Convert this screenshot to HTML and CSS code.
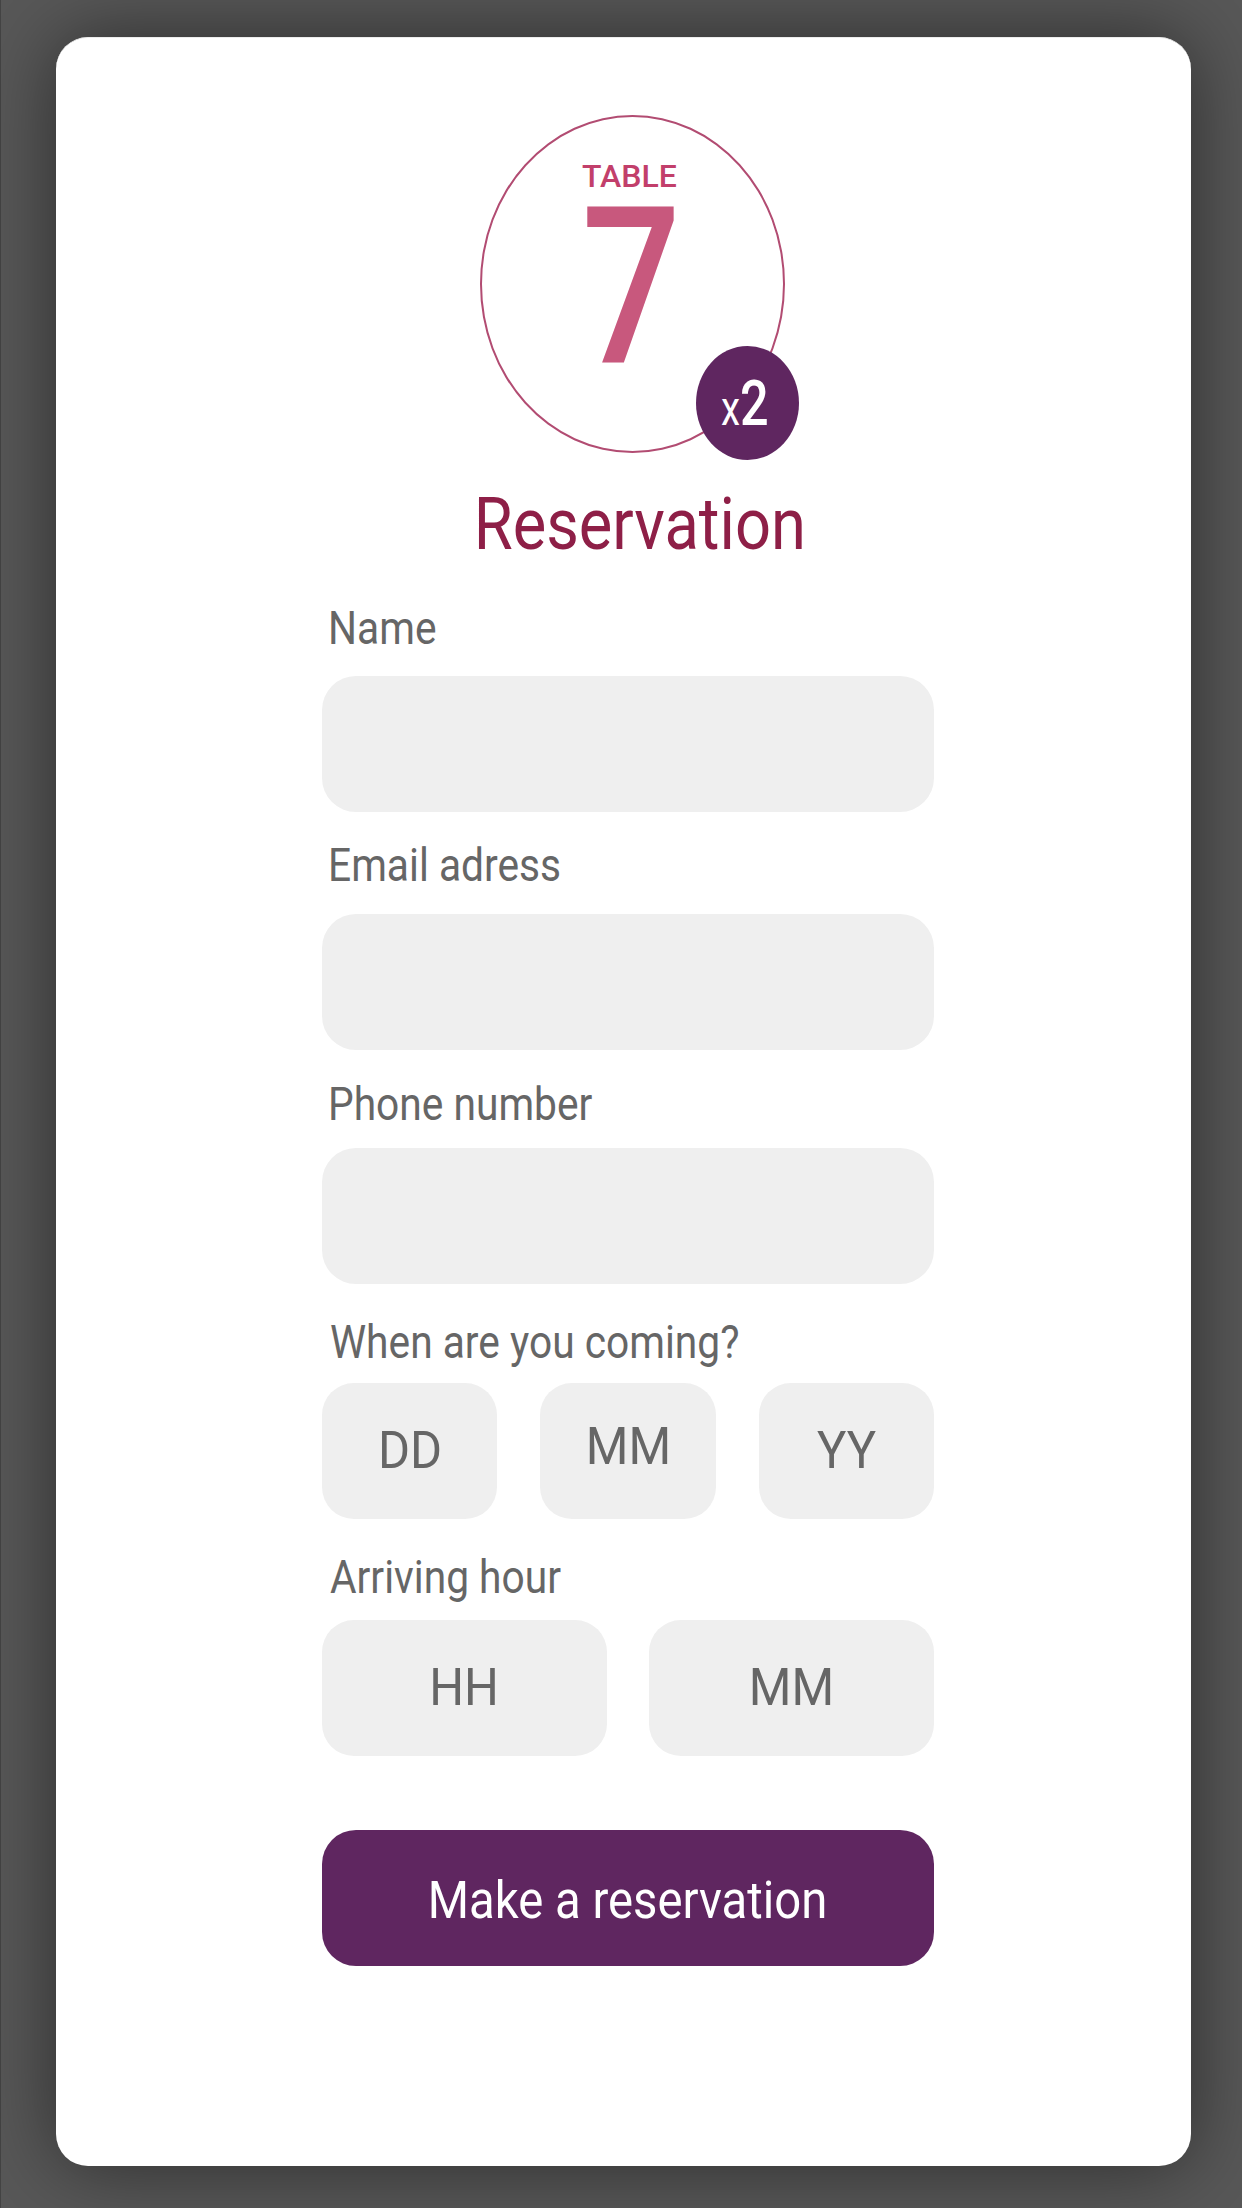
FILE: index.html
```html
<!DOCTYPE html>
<html lang="en">
<head>
<meta charset="utf-8">
<title>Table 7 – Reservation</title>
<link rel="stylesheet" href="styles.css">
</head>
<body>
<div class="screen">
  <main class="card">
    <div class="content">
      <div class="logo">
        <div class="table-word">TABLE</div>
        <div class="table-num"><span class="num-glyph">7</span></div>
        <div class="badge"><span class="badge-text"><span class="bx">x</span>2</span></div>
      </div>
      <h1 class="title"><span class="title-text">Reservation</span></h1>

      <div class="field f-name">
        <div class="label"><span class="label-text">Name</span></div>
        <div class="input"></div>
      </div>
      <div class="field f-email">
        <div class="label"><span class="label-text">Email adress</span></div>
        <div class="input"></div>
      </div>
      <div class="field f-phone">
        <div class="label"><span class="label-text">Phone number</span></div>
        <div class="input"></div>
      </div>
      <div class="field f-date">
        <div class="label"><span class="label-text">When are you coming?</span></div>
        <div class="row row-3">
          <div class="input small"><span class="ph">DD</span></div>
          <div class="input small up"><span class="ph">MM</span></div>
          <div class="input small"><span class="ph">YY</span></div>
        </div>
      </div>
      <div class="field f-hour">
        <div class="label"><span class="label-text">Arriving hour</span></div>
        <div class="row row-2">
          <div class="input small"><span class="ph">HH</span></div>
          <div class="input small"><span class="ph">MM</span></div>
        </div>
      </div>

      <button class="submit" type="button"><span class="submit-text">Make a reservation</span></button>
    </div>
  </main>
</div>
</body>
</html>
```

FILE: styles.css
```css
* { box-sizing: border-box; }

html, body {
  margin: 0;
  padding: 0;
}

body {
  width: 1242px;
  height: 2208px;
  background: #585858;
  font-family: Roboto, "Noto Sans", "Liberation Sans", sans-serif;
  overflow: hidden;
}

.screen {
  width: 1242px;
  height: 2208px;
  padding: 37px 52px 0 55px;
  border-left: 1px solid #444;
}

.card {
  width: 1135px;
  height: 2129px;
  background: #ffffff;
  border-radius: 32px;
  border-top: 1px solid #ececec;
  box-shadow: 0 0 80px 0 rgba(0, 0, 0, 0.5);
  overflow: hidden;
}

.content {
  width: 612px;
  margin-left: 266px;
  display: flex;
  flex-direction: column;
}

/* ---------- logo ---------- */
.logo {
  position: relative;
  width: 305px;
  height: 338px;
  margin-top: 77px;
  margin-left: 158px;
  border: 2px solid #b24c72;
  border-radius: 50%;
  display: flex;
  flex-direction: column;
  align-items: center;
  padding-top: 43px;
  padding-right: 6px;
}

.table-word {
  font-size: 32px;
  line-height: 32px;
  font-weight: 500;
  color: #c23f6b;
}

.table-num {
  margin-top: 15px;
  font-size: 219px;
  line-height: 160px;
  font-weight: 500;
  color: #c8587d;
  padding-left: 4px;
}

.num-glyph {
  display: inline-block;
  transform: scaleX(0.8);
}

.badge {
  position: absolute;
  left: 214px;
  top: 229px;
  width: 103px;
  height: 114px;
  border-radius: 50%;
  background: #5f2660;
  display: flex;
  align-items: center;
  justify-content: center;
  padding-right: 5px;
}

.badge-text {
  display: inline-block;
  color: #ffffff;
  font-size: 63px;
  line-height: 63px;
  font-weight: 500;
  transform: scaleX(0.8);
}

.bx {
  font-size: 48px;
  line-height: 48px;
  font-weight: 400;
}

/* ---------- title ---------- */
.title {
  margin: 35px 0 0;
  padding-left: 24px;
  text-align: center;
  font-size: 73px;
  line-height: 73px;
  font-weight: 400;
  color: #8e1f47;
}

.title-text {
  display: inline-block;
  transform: scaleX(0.866);
}

/* ---------- fields ---------- */
.label {
  font-size: 46px;
  line-height: 46px;
  color: #666666;
  padding-left: 6px;
}

.label-text {
  display: inline-block;
  transform: scaleX(0.885);
  transform-origin: left center;
}

.input {
  height: 136px;
  background: #efefef;
  border-radius: 34px;
}

.f-name { margin-top: 44px; }
.f-name .label { margin-bottom: 25px; }

.f-email { margin-top: 30px; }
.f-email .label { margin-bottom: 26px; }

.f-phone { margin-top: 31px; }
.f-phone .label { margin-bottom: 21px; }

.f-date { margin-top: 35px; }
.f-date .label { margin-bottom: 18px; padding-left: 8px; }

.f-hour { margin-top: 35px; }
.f-hour .label { margin-bottom: 20px; padding-left: 8px; }

.row {
  display: grid;
}

.row-3 {
  grid-template-columns: repeat(3, 1fr);
  column-gap: 43px;
}

.row-2 {
  grid-template-columns: repeat(2, 1fr);
  column-gap: 42px;
}

.input.small {
  border-radius: 32px;
  text-align: center;
  font-size: 52px;
  line-height: 136px;
  color: #666666;
}

.input.small.up {
  line-height: 128px;
}

.ph {
  display: inline-block;
  transform: scaleX(0.94);
}

/* ---------- button ---------- */
.submit {
  margin-top: 74px;
  height: 136px;
  width: 612px;
  border: none;
  border-radius: 34px;
  background: #5f2660;
  color: #ffffff;
  font-family: Roboto, "Noto Sans", "Liberation Sans", sans-serif;
  font-size: 51px;
  line-height: 131px;
  padding: 5px 0 0;
  text-align: center;
}

.submit-text {
  display: inline-block;
  transform: scaleX(0.927);
}
```
